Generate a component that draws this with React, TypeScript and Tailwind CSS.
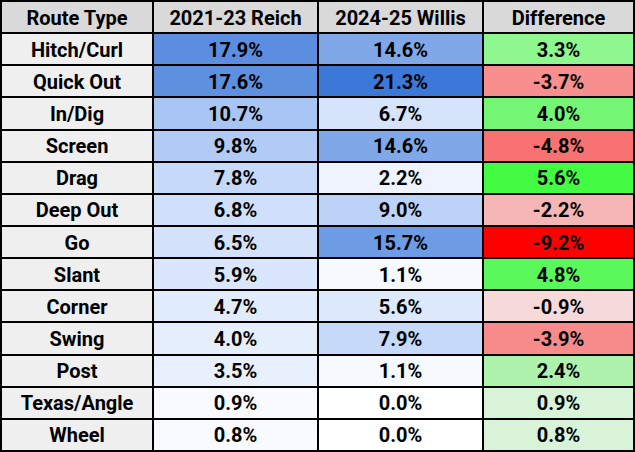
import React from 'react'

type Row = {
    route: string
    reich: string
    reichBg: string
    willis: string
    willisBg: string
    diff: string
    diffBg: string
}

// heat map colours picked per cell (sheet-style conditional formatting)
const rows: Row[] = [
    { route: 'Hitch/Curl',   reich: '17.9%', reichBg: 'bg-[#5b8ee0]', willis: '14.6%', willisBg: 'bg-[#80a8e8]', diff: '3.3%',  diffBg: 'bg-[#8ef78e]' },
    { route: 'Quick Out',    reich: '17.6%', reichBg: 'bg-[#5e90e0]', willis: '21.3%', willisBg: 'bg-[#3c78d8]', diff: '-3.7%', diffBg: 'bg-[#f78f8f]' },
    { route: 'In/Dig',       reich: '10.7%', reichBg: 'bg-[#a9c5f3]', willis: '6.7%',  willisBg: 'bg-[#d5e3fb]', diff: '4.0%',  diffBg: 'bg-[#74f674]' },
    { route: 'Screen',       reich: '9.8%',  reichBg: 'bg-[#b1cbf4]', willis: '14.6%', willisBg: 'bg-[#80a8e8]', diff: '-4.8%', diffBg: 'bg-[#f87272]' },
    { route: 'Drag',         reich: '7.8%',  reichBg: 'bg-[#c6d9f8]', willis: '2.2%',  willisBg: 'bg-[#eef3fd]', diff: '5.6%',  diffBg: 'bg-[#42fb42]' },
    { route: 'Deep Out',     reich: '6.8%',  reichBg: 'bg-[#d0e0fa]', willis: '9.0%',  willisBg: 'bg-[#bcd2f6]', diff: '-2.2%', diffBg: 'bg-[#f7b6b6]' },
    { route: 'Go',           reich: '6.5%',  reichBg: 'bg-[#d3e2fa]', willis: '15.7%', willisBg: 'bg-[#6e9ce4]', diff: '-9.2%', diffBg: 'bg-[#ff0000]' },
    { route: 'Slant',        reich: '5.9%',  reichBg: 'bg-[#d9e6fb]', willis: '1.1%',  willisBg: 'bg-[#f6f9fe]', diff: '4.8%',  diffBg: 'bg-[#5bf85b]' },
    { route: 'Corner',       reich: '4.7%',  reichBg: 'bg-[#e0ebfc]', willis: '5.6%',  willisBg: 'bg-[#dce8fb]', diff: '-0.9%', diffBg: 'bg-[#f6dada]' },
    { route: 'Swing',        reich: '4.0%',  reichBg: 'bg-[#e5eefc]', willis: '7.9%',  willisBg: 'bg-[#c6d9f8]', diff: '-3.9%', diffBg: 'bg-[#f78a8a]' },
    { route: 'Post',         reich: '3.5%',  reichBg: 'bg-[#e8f0fd]', willis: '1.1%',  willisBg: 'bg-[#f6f9fe]', diff: '2.4%',  diffBg: 'bg-[#aef2ae]' },
    { route: 'Texas/Angle',  reich: '0.9%',  reichBg: 'bg-[#f8faff]', willis: '0.0%',  willisBg: 'bg-[#ffffff]', diff: '0.9%',  diffBg: 'bg-[#d8f3d8]' },
    { route: 'Wheel',        reich: '0.8%',  reichBg: 'bg-[#f8faff]', willis: '0.0%',  willisBg: 'bg-[#ffffff]', diff: '0.8%',  diffBg: 'bg-[#d9f3d9]' },
]

const headers = ['Route Type', '2021-23 Reich', '2024-25 Willis', 'Difference']

const Cell: React.FC<{ className?: string; children: React.ReactNode }> = ({ className = '', children }) => (
    <div className={`flex items-center justify-center pt-[1px] ${className}`}>{children}</div>
)

export default function App() {
    return (
        <div
            className="grid h-[452px] w-[635px] grid-cols-[150px_163px_163px_149px] grid-rows-[repeat(14,1fr)] gap-[2px] bg-black p-[2px] text-[20px] leading-none font-bold text-black"
            style={{ fontFamily: 'Roboto, "Liberation Sans", sans-serif' }}
        >
            {headers.map((h) => (
                <Cell key={h} className="bg-[#d9d9d9]">{h}</Cell>
            ))}
            {rows.map((r) => (
                <React.Fragment key={r.route}>
                    <Cell className="bg-[#efefef]">{r.route}</Cell>
                    <Cell className={r.reichBg}>{r.reich}</Cell>
                    <Cell className={r.willisBg}>{r.willis}</Cell>
                    <Cell className={r.diffBg}>{r.diff}</Cell>
                </React.Fragment>
            ))}
        </div>
    )
}
